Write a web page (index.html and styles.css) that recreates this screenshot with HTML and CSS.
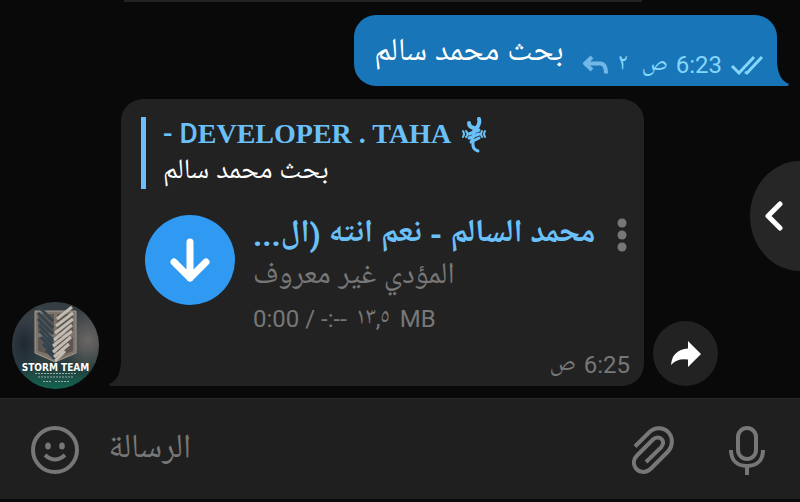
FILE: index.html
```
<!DOCTYPE html>
<html lang="ar">
<head>
    <meta charset="UTF-8">
    <meta name="viewport" content="width=device-width, initial-scale=1.0">
    <title>Chat</title>
    <link rel="stylesheet" href="styles.css">
</head>
<body>
    <main class="chat">
        <div class="previous"></div>

        <div class="row row-out">
            <div class="bubble bubble-out">
                <p class="message" dir="rtl">بحث محمد سالم</p>
                <div class="meta">
                    <svg class="reply-icon" width="26" height="20" viewBox="0 0 26 20">
                        <path d="M9 2 L2 8.500 L9 15 M2.500 8.500 H17 Q23 8.500 23 18.500" />
                    </svg>
                    <span class="replies">٢</span>
                    <span>ص</span>
                    <time>6:23</time>
                    <svg class="checks" width="34" height="20" viewBox="0 0 34 20">
                        <path d="M2 11 L9 18 L24 2 M15 17 L17 18 L32 2" />
                    </svg>
                </div>
                <svg class="tail tail-out" width="12" height="24" viewBox="0 0 12 24">
                    <path d="M0 0 Q1 18 12 22 L11 24 H0 Z" />
                </svg>
            </div>
        </div>

        <div class="row row-in">
            <svg class="avatar" width="87" height="87" viewBox="0 0 87 87" role="img" aria-label="Storm Team">
                <defs>
                    <linearGradient id="sky" x1="0" y1="0" x2="0" y2="1">
                        <stop offset="0" stop-color="#343d42" />
                        <stop offset="0.5" stop-color="#394048" />
                        <stop offset="0.75" stop-color="#263c3c" />
                        <stop offset="1" stop-color="#126550" />
                    </linearGradient>
                    <radialGradient id="haze">
                        <stop offset="0" stop-color="#77706b" stop-opacity="0.8" />
                        <stop offset="1" stop-color="#77706b" stop-opacity="0" />
                    </radialGradient>
                    <radialGradient id="shade">
                        <stop offset="0" stop-color="#18222e" stop-opacity="0.8" />
                        <stop offset="1" stop-color="#18222e" stop-opacity="0" />
                    </radialGradient>
                    <clipPath id="round"><circle cx="43.500" cy="43.500" r="43.500" /></clipPath>
                </defs>
                <g clip-path="url(#round)">
                    <rect width="87" height="87" fill="url(#sky)" />
                    <ellipse cx="76" cy="38" rx="26" ry="32" fill="url(#haze)" />
                    <ellipse cx="12" cy="42" rx="18" ry="26" fill="url(#shade)" />
                    <path d="M23 9 H64 V51 L43 60 L23 51 Z" fill="#7d746b" stroke="#a39a8f" />
                    <path d="M26 12 H42 V31 H26 Z M45 12 H61 V31 H45 Z M26 35 H42 V54 L26 49 Z M45 35 H61 V49 L45 55 Z" fill="#5c5550" />
                    <path class="wing-dark" d="M27 5 L41 19 M26 11 L41 26 M26 17 L41 32 M27 23 L41 38 M28 29 L42 44 M29 35 L42 49 M31 42 L43 54 M34 48 L44 58" />
                    <path class="wing-light" d="M60 5 L45 17 M61 11 L44 24 M61 17 L43 31 M60 23 L42 38 M60 29 L41 44 M59 35 L41 50 M57 42 L42 55 M53 49 L43 59" />
                    <text x="43.500" y="69" class="avatar-name">STORM TEAM</text>
                    <path d="M23 71.500 H65" class="caption" />
                    <path d="M26 75 H61" class="caption" />
                    <path d="M31 79.500 H39 M43 79.500 H57" class="caption" />
                </g>
            </svg>

            <article class="bubble bubble-in">
                <svg class="tail tail-in" width="12" height="24" viewBox="0 0 12 24">
                    <path d="M12 0 Q11 18 0 22 L1 24 H12 Z" />
                </svg>

                <blockquote class="quote">
                    <div class="quote-name">
                        <span>- D<b>EVELOPER . TAHA</b></span>
                        <svg width="26" height="36" viewBox="0 0 26 36">
                            <g class="dragon">
                                <path d="M18 2 Q19 6 17 9 L14 13 M8 6 Q8 10 13 11" stroke-width="4" />
                                <path d="M14 12 Q10 16 14 18 Q9 22 12 26 Q11 32 17 34" stroke-width="3" />
                                <path d="M8 17 L18 13 M8 21 L18 17 M10 25 L18 21" stroke-width="3" />
                                <path d="M2 14 Q4 17 2 20 M5 14 Q8 17 5 20 M24 14 Q22 17 24 20 M21 14 Q19 17 21 20" stroke-width="2" />
                            </g>
                        </svg>
                    </div>
                    <p class="quote-text" dir="rtl">بحث محمد سالم</p>
                </blockquote>

                <div class="audio">
                    <button class="download" type="button" aria-label="تنزيل">
                        <svg width="90" height="90" viewBox="0 0 90 90">
                            <path d="M45 27 V63 M29 47 L45 63 L61 47" />
                        </svg>
                    </button>
                    <div class="track">
                        <h3 dir="rtl">محمد السالم - نعم انته (ال...</h3>
                        <p class="artist" dir="rtl">المؤدي غير معروف</p>
                        <p class="progress">
                            <span>0:00 / -:--</span>
                            <span>١٣,٥</span>
                            <span>MB</span>
                        </p>
                    </div>
                    <button class="more" type="button" aria-label="المزيد">
                        <svg width="10" height="34" viewBox="0 0 10 34">
                            <circle cx="5" cy="5" r="4.500" />
                            <circle cx="5" cy="17" r="4.500" />
                            <circle cx="5" cy="29" r="4.500" />
                        </svg>
                    </button>
                </div>

                <div class="meta meta-in">
                    <span>ص</span>
                    <time>6:25</time>
                </div>
            </article>

            <button class="share" type="button" aria-label="مشاركة">
                <svg width="32" height="28" viewBox="0 0 32 28">
                    <path d="M18 1 L31 14 L18 27 V19.500 Q7 18 1 25 Q2 10 18 8.500 Z" />
                </svg>
            </button>
        </div>

        <button class="drawer" type="button" aria-label="فتح">
            <svg width="18" height="30" viewBox="0 0 18 30">
                <path d="M15 3 L3 15 L15 27" />
            </svg>
        </button>
    </main>

    <form class="composer">
        <button class="tool" type="button" aria-label="رموز">
            <svg width="48" height="48" viewBox="0 0 48 48">
                <circle cx="24" cy="24" r="22" />
                <path d="M14 29 Q24 38 34 29" />
                <ellipse class="eye" cx="17" cy="20" rx="2.800" ry="3.500" />
                <ellipse class="eye" cx="31" cy="20" rx="2.800" ry="3.500" />
            </svg>
        </button>
        <input class="field" type="text" placeholder="الرسالة" aria-label="الرسالة">
        <button class="tool" type="button" aria-label="إرفاق">
            <svg width="42" height="48" viewBox="0 0 42 48">
                <path d="M3 20.500 L17 6.500 C24 -0.500 33 2 37 7 C41 12 41 20 36 25.500 L19 42.500 C14 47.500 7 46.500 4 42.500 C1 38.500 1 33.500 5 29.500 L21 13.500 C24 10.500 28 11 30 13.500 C32 16 31 19 29 21.500 L14 36" />
            </svg>
        </button>
        <button class="tool" type="button" aria-label="تسجيل">
            <svg width="38" height="50" viewBox="0 0 38 50">
                <rect x="10" y="3" width="18" height="31" rx="9" />
                <path d="M3 25 C3 36 10 41 19 41 C28 41 35 36 35 25 M19 41 V50" />
            </svg>
        </button>
    </form>
</body>
</html>
```
FILE: styles.css
```
:root {
    --background: #090909;
    --bubble: #222222;
    --outgoing: #1775b8;
    --accent: #6ac0f8;
    --muted: #777777;
    --light-blue: #84d6fb;
}

* {
    margin: 0;
    padding: 0;
    box-sizing: border-box;
}

body {
    display: flex;
    flex-direction: column;
    min-height: 100vh;
    background: var(--background);
    color: white;
    font-family: Roboto, "Noto Naskh Arabic UI", "Noto Naskh Arabic", "Noto Sans Arabic", "Noto Sans", sans-serif;
}

button {
    border: none;
    background: none;
    cursor: pointer;
}

svg {
    display: block;
    flex: none;
}

.chat {
    position: relative;
    flex: 1;
    padding-bottom: 12px;
}

.previous {
    height: 2px;
    margin: 0 158px 13px 124px;
    background: var(--bubble);
}

.row {
    display: flex;
}

.row-out {
    justify-content: flex-end;
    padding-right: 23px;
    margin-bottom: 13px;
}

.row-in {
    align-items: flex-end;
    padding-left: 12px;
    padding-right: 82px;
}

.bubble {
    position: relative;
    border-radius: 22px;
}

.bubble-out {
    display: flex;
    align-items: flex-end;
    gap: 20px;
    height: 71px;
    padding: 0 13px 7px 20px;
    background: var(--outgoing);
    border-bottom-right-radius: 0;
}

.message {
    padding-bottom: 10px;
    font-size: 32px;
    line-height: 32px;
    white-space: nowrap;
}

.meta {
    display: flex;
    align-items: center;
    gap: 8px;
    color: var(--light-blue);
    font-size: 24px;
    line-height: 28px;
}

.replies {
    margin-right: 6px;
}

.reply-icon {
    fill: none;
    stroke: #72b7e6;
    stroke-width: 4;
}

.checks {
    fill: none;
    stroke: var(--light-blue);
    stroke-width: 3;
}

.tail {
    position: absolute;
    bottom: 0;
}

.tail-out {
    left: 100%;
    fill: var(--outgoing);
}

.tail-in {
    right: 100%;
    fill: var(--bubble);
}

.avatar {
    margin-right: 22px;
    margin-bottom: -3px;
}

.wing-dark,
.wing-light {
    fill: none;
    stroke-width: 3;
}

.wing-dark {
    stroke: #33444f;
}

.wing-light {
    stroke: #c1bbb2;
}

.avatar-name {
    fill: white;
    font: bold 10px "DejaVu Sans Condensed", "DejaVu Sans", sans-serif;
    text-anchor: middle;
}

.caption {
    stroke: #9ab0aa;
    stroke-dasharray: 2 1;
}

.bubble-in {
    flex: 1;
    min-width: 0;
    padding: 18px 14px 7px 20px;
    background: var(--bubble);
    border-bottom-left-radius: 0;
}

.quote {
    height: 72px;
    padding-left: 17px;
    border-left: 5px solid var(--accent);
}

.quote-name {
    display: flex;
    align-items: flex-start;
    gap: 10px;
    height: 36px;
    color: var(--accent);
    font-size: 28px;
    font-weight: 500;
    line-height: 34px;
    white-space: nowrap;
}

.quote-name b {
    font-family: "Liberation Serif", serif;
}

.dragon {
    fill: none;
    stroke: var(--accent);
    stroke-linecap: round;
}

.quote-text {
    font-size: 28px;
    line-height: 40px;
    text-align: left;
}

.audio {
    display: flex;
    align-items: flex-start;
    gap: 18px;
    margin-top: 26px;
    padding-left: 4px;
}

.download {
    width: 90px;
    height: 90px;
    border-radius: 50%;
    background: #309af3;
}

.download path,
.drawer path {
    fill: none;
    stroke: white;
    stroke-width: 7;
    stroke-linecap: round;
    stroke-linejoin: round;
}

.track {
    flex: 1;
    min-width: 0;
}

.track h3 {
    color: var(--accent);
    font-size: 32px;
    line-height: 40px;
    text-align: left;
    white-space: nowrap;
}

.artist {
    color: var(--muted);
    font-size: 30px;
    line-height: 44px;
    text-align: left;
}

.progress {
    display: flex;
    align-items: center;
    gap: 10px;
    color: var(--muted);
    font-size: 24px;
    line-height: 40px;
}

.more {
    padding-top: 3px;
    margin-right: 3px;
    fill: var(--muted);
}

.meta-in {
    justify-content: flex-end;
    margin-top: 12px;
    color: var(--muted);
}

.share {
    display: flex;
    align-items: center;
    justify-content: center;
    width: 65px;
    height: 65px;
    margin-left: 9px;
    border-radius: 50%;
    background: var(--bubble);
    fill: white;
}

/* half-round handle on the right edge */
.drawer {
    position: absolute;
    top: 161px;
    right: 0;
    width: 50px;
    height: 110px;
    padding-left: 15px;
    border-radius: 50px 0 0 50px / 55px 0 0 55px;
    background: #262626;
}

.drawer path {
    stroke-width: 5;
}

.composer {
    display: flex;
    align-items: center;
    height: 101px;
    margin-bottom: 3px;
    padding: 2px 34px 0 31px;
    background: #1f1f1f;
    border-top: 1px solid #2a2a2a;
}

.tool {
    fill: none;
    stroke: var(--muted);
    stroke-width: 4;
}

.tool + .tool {
    margin-left: 54px;
}

.eye {
    fill: var(--muted);
    stroke: none;
}

.field {
    flex: 1;
    min-width: 0;
    height: 48px;
    margin-left: 29px;
    border: none;
    outline: none;
    background: none;
    color: white;
    font-family: inherit;
    font-size: 34px;
}

.field::placeholder {
    color: var(--muted);
}
```
